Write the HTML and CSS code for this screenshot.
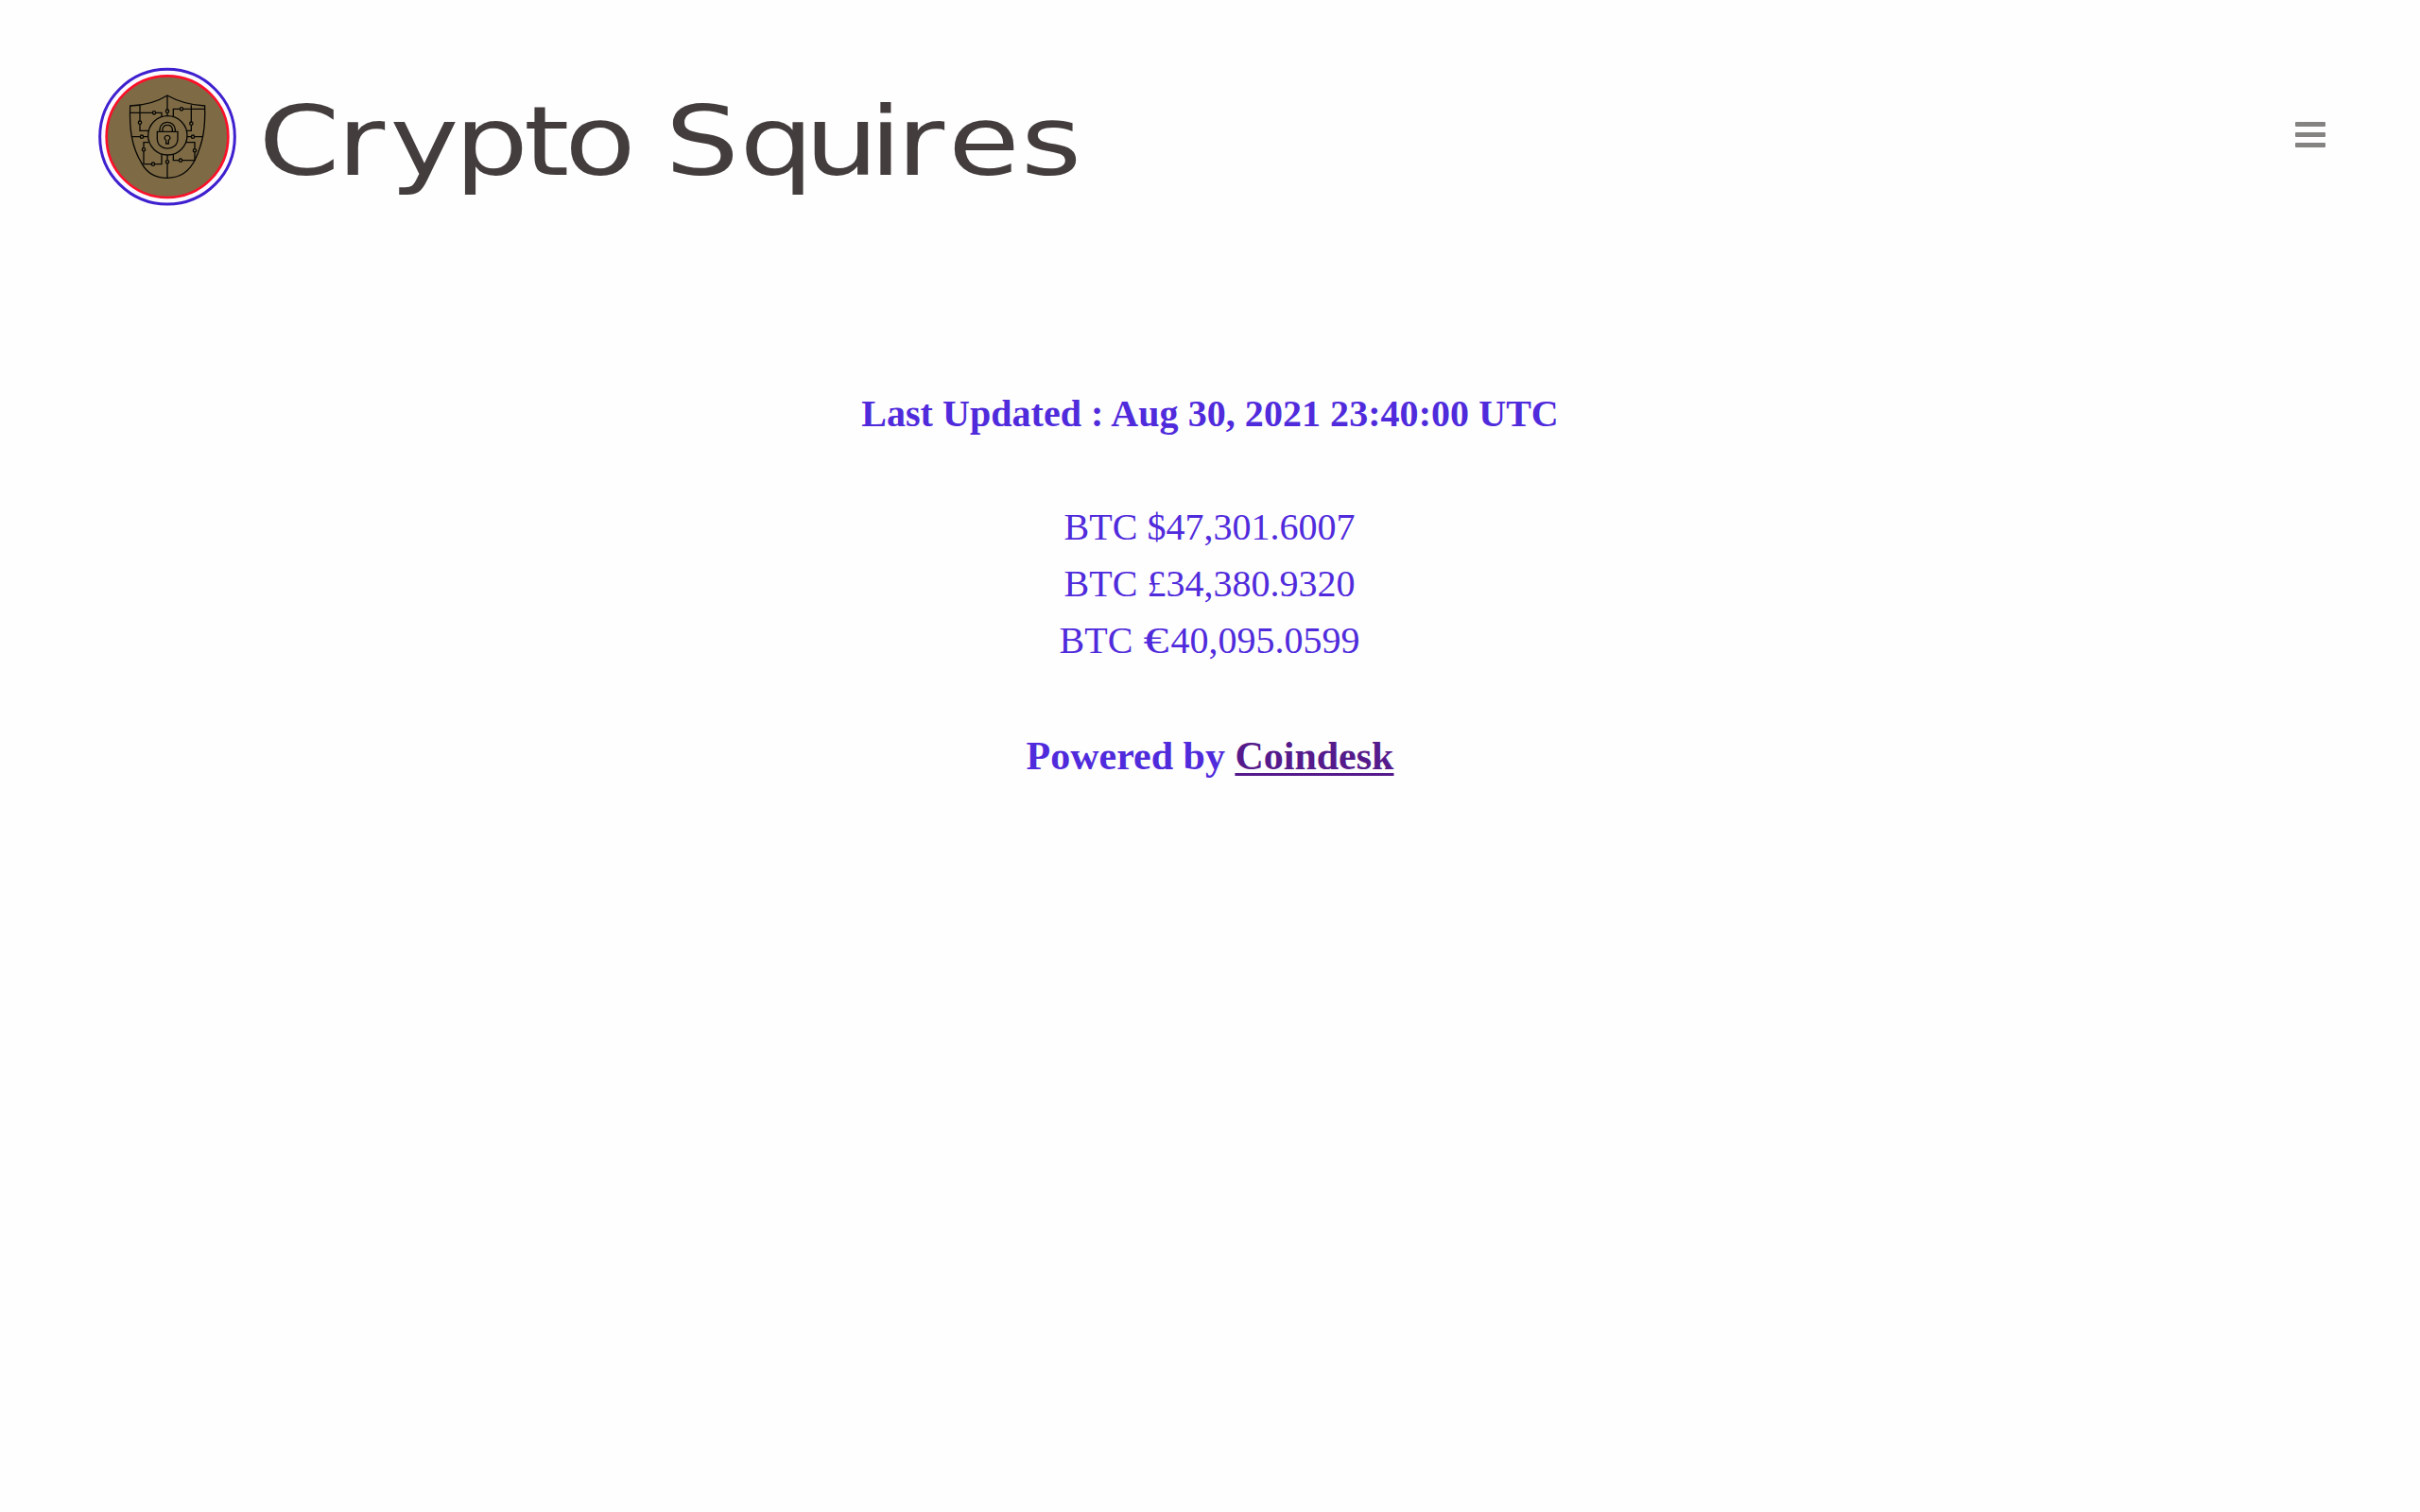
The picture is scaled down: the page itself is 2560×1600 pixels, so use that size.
FILE: index.html
```html
<!DOCTYPE html>
<html lang="en">
<head>
<meta charset="utf-8">
<title>Crypto Squires</title>
<link rel="stylesheet" href="styles.css">
</head>
<body>
<header class="header">
  <svg class="logo" viewBox="0 0 525 510" aria-hidden="true">
    <circle cx="261" cy="254" r="214" fill="#fbfaff" stroke="#3e20ce" stroke-width="9"/>
    <circle cx="261" cy="254" r="193" fill="#7e6b46" stroke="#fb1029" stroke-width="8"/>
    <g class="lines">
      <path d="M143 156Q212 154 261 123Q312 152 380 156C382 224 375 270 350 325C330 367 296 385 261 385S196 370 179 337C148 286 140 230 143 156Z"/>
      <circle cx="262" cy="250" r="62"/>
      <path d="M261 123V168M261 179V188M261 312V329M261 340V385M143 178H214M225 178H243V190M174 155V204M174 215V235H202M380 166H312M301 166H280V190M337 154V207M337 218V235H322M150 254H175M186 254H199M324 254H337M348 254H374M202 272H186V290M186 301V341H210M222 341H243V310M321 272H348V293M348 304V329H308M297 329H280V310"/>
      <circle cx="261" cy="173" r="5"/><circle cx="261" cy="334" r="5"/>
      <circle cx="219" cy="178" r="5"/><circle cx="174" cy="209" r="5"/>
      <circle cx="306" cy="166" r="5"/><circle cx="337" cy="212" r="5"/>
      <circle cx="180" cy="254" r="5"/><circle cx="342" cy="254" r="5"/>
      <circle cx="186" cy="295" r="5"/><circle cx="216" cy="341" r="5"/>
      <circle cx="348" cy="298" r="5"/><circle cx="303" cy="329" r="5"/>
      <path d="M229 238H294V260C294 302 229 302 229 260ZM237 238V230C239 201 283 201 286 230V238M246 238V230C248 213 275 213 277 230V238M257 265C249 261 251 250 261 250S273 261 265 265V276H257Z"/>
    </g>
  </svg>
  <svg class="brand" viewBox="270 90 890 130" role="heading" aria-level="1">
    <text transform="scale(1.22 1)" y="185" x="224.1 292.3 338.1 394 454.2 489.6 545 576.8 641.4 697.8 754 777.5 822.1 885.3">Crypto Squires</text>
  </svg>
  <button class="menu" aria-label="Menu"><span></span><span></span><span></span></button>
</header>
<main class="prices">
  <p class="updated">Last Updated : Aug 30, 2021 23:40:00 UTC</p>
  <ul class="rates">
    <li>BTC $47,301.6007</li>
    <li>BTC £34,380.9320</li>
    <li>BTC <span class="euro">€</span>40,095.0599</li>
  </ul>
  <p class="powered">Powered by <a href="#">Coindesk</a></p>
</main>
</body>
</html>
```
FILE: styles.css
```css
* { box-sizing: border-box; }
body {
  margin: 0;
  background: #fefefe;
  color: #502bdc;
  font: 40px/60px "Liberation Serif", "Times New Roman", serif;
}
.header {
  display: flex;
  align-items: flex-start;
  height: 408px;
  padding: 60px 100px 0 90px;
}
.logo { width: 175px; height: 170px; }
.lines {
  fill: none;
  stroke: #080704;
  stroke-width: 4;
}
.brand {
  width: 890px;
  height: 130px;
  margin: 30px 0 0 5px;
  fill: #443d3d;
  font-family: "DejaVu Sans", sans-serif;
  font-size: 101px;
}
.menu {
  display: flex;
  flex-direction: column;
  gap: 6px;
  width: 32px;
  margin: 69px 0 0 auto;
  padding: 0;
  border: 0;
  background: none;
}
.menu span {
  height: 5px;
  border-radius: 1px;
  background: #858282;
}
.prices { text-align: center; }
.updated, .powered {
  margin: 0;
  font-weight: 700;
}
.updated { letter-spacing: 0.05px; }
.rates {
  margin: 60px 0;
  padding: 0;
  list-style: none;
}
.rates li { padding-right: 1px; }
.euro {
  display: inline-block;
  width: 30px;
  line-height: 1;
  transform: scaleX(1.35);
}
.powered {
  font-size: 42px;
  line-height: 64px;
}
.powered a {
  color: #551a8b;
  text-decoration-thickness: 3px;
  text-underline-offset: 4px;
  text-decoration-skip-ink: none;
}
```
